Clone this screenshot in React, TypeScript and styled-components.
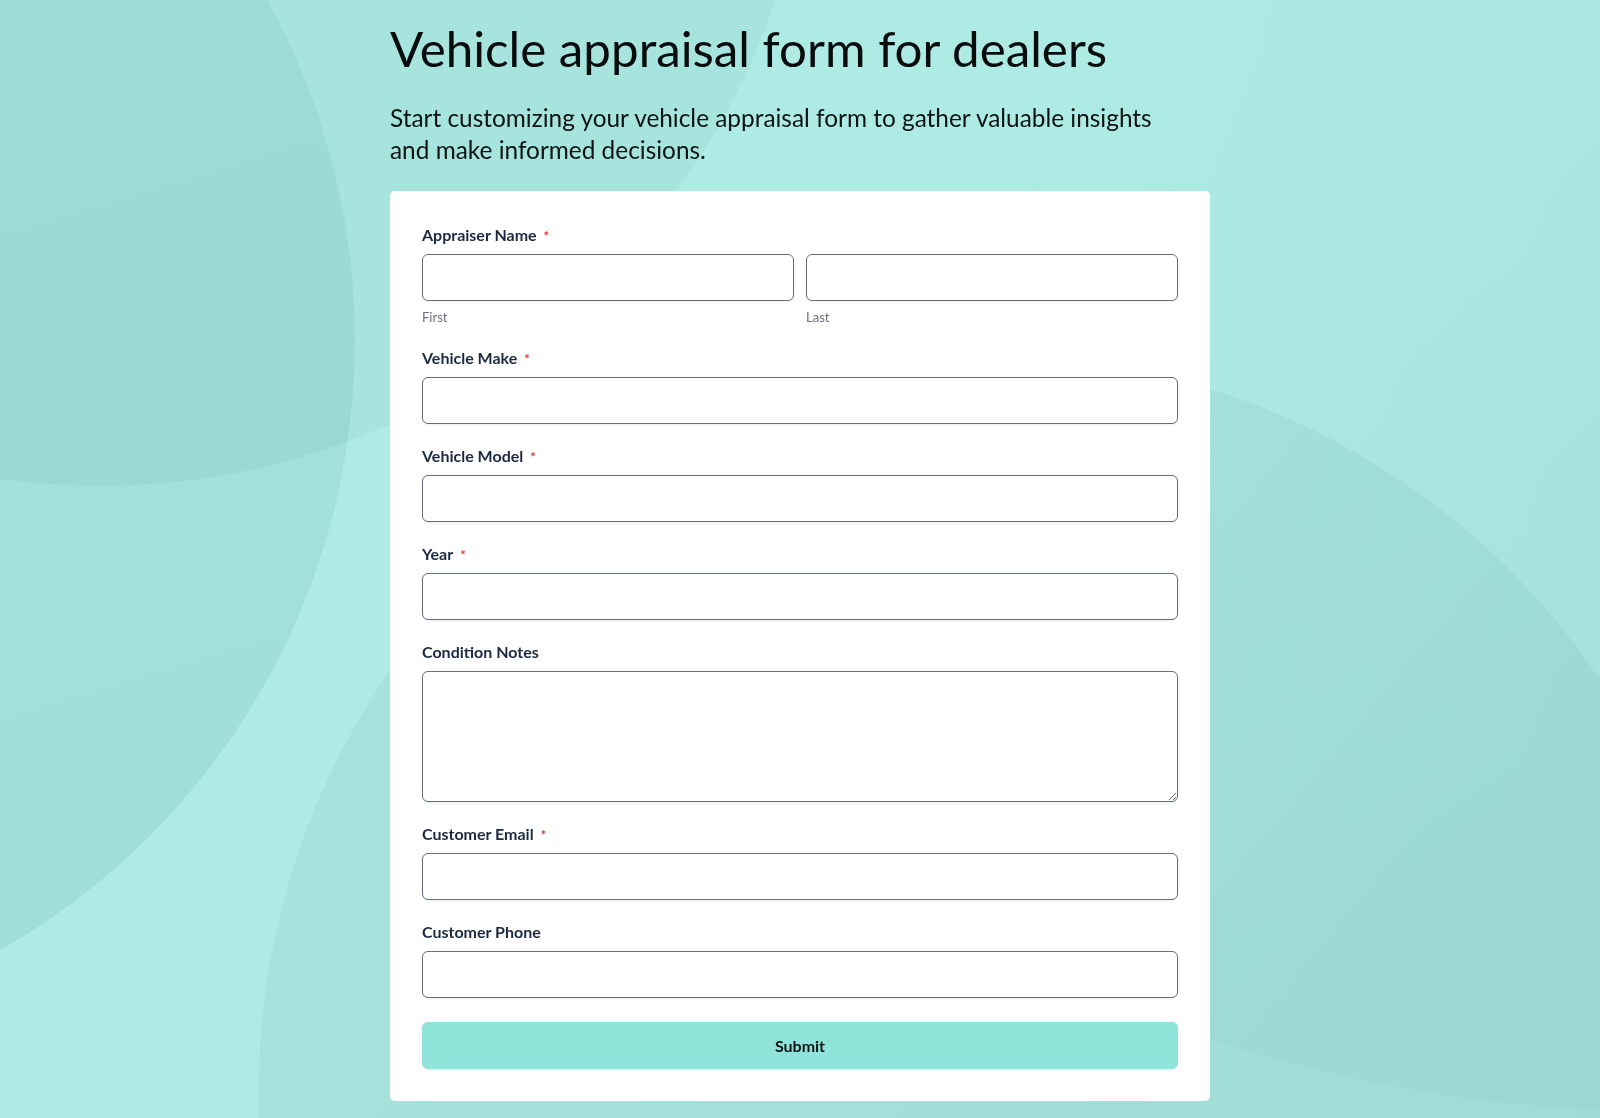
import styled, { createGlobalStyle } from "styled-components";

const GlobalStyle = createGlobalStyle`
  html, body {
    margin: 0;
    padding: 0;
    min-height: 100%;
  }
  body {
    font-family: "Lato", "Noto Sans", sans-serif;
    background: #afebe5;
  }
  * {
    box-sizing: border-box;
  }
`;

const Page = styled.div`
  position: relative;
  min-height: 100vh;
  padding: 19px 0 18px;
`;

const Backdrop = styled.svg`
  position: fixed;
  inset: 0;
  width: 100%;
  height: 100%;
  z-index: 0;
  pointer-events: none;
`;

const Column = styled.main`
  position: relative;
  z-index: 1;
  width: 820px;
  margin: 0 auto;
`;

const Title = styled.h1`
  margin: 0;
  font-size: 49.3px;
  line-height: 1.2;
  font-weight: 400;
  color: #080c0c;
`;

const Intro = styled.p`
  max-width: 790px;
  margin: 24px 0 25px;
  font-size: 24.4px;
  line-height: 32px;
  color: #0e1414;
`;

const Card = styled.form`
  background: #ffffff;
  border-radius: 5px;
  padding: 32px;
  display: flex;
  flex-direction: column;
  gap: 20px;
`;

const Field = styled.div`
  display: flex;
  flex-direction: column;
`;

const Label = styled.label`
  font-size: 16px;
  line-height: 24px;
  height: 24px;
  font-weight: 700;
  color: #1c2940;
  margin-bottom: 7px;
`;

const Required = styled.span`
  color: #d93a2b;
  font-size: 13px;
  line-height: 1;
  margin-left: 7px;
`;

const NameRow = styled.div`
  display: grid;
  grid-template-columns: 1fr 1fr;
  column-gap: 12px;
`;

const NamePart = styled.div`
  display: flex;
  flex-direction: column;
`;

const SubLabel = styled.span`
  margin-top: 7px;
  font-size: 13px;
  line-height: 18px;
  color: #6b7280;
`;

const TextInput = styled.input`
  width: 100%;
  height: 47px;
  border: 1px solid #636d80;
  border-radius: 6px;
  background: #fff;
  padding: 0 12px;
  font: inherit;
  font-size: 16px;
  box-shadow: 0 1px 3px rgba(16, 24, 40, 0.08);
  outline: none;
`;

const TextArea = styled.textarea`
  width: 100%;
  height: 131px;
  border: 1px solid #636d80;
  border-radius: 6px;
  background: #fff;
  padding: 10px 12px;
  font: inherit;
  font-size: 16px;
  box-shadow: 0 1px 3px rgba(16, 24, 40, 0.08);
  outline: none;
  resize: vertical;
  display: block;
`;

const SubmitButton = styled.button`
  margin-top: 4px;
  height: 47px;
  width: 100%;
  border: none;
  border-radius: 6px;
  background: #8fe3d8;
  color: #101418;
  font-family: "Lato", sans-serif;
  font-size: 16px;
  font-weight: 700;
  box-shadow: 0 1px 4px rgba(16, 24, 40, 0.1);
  cursor: pointer;
`;

type FieldDef = {
  id: string;
  label: string;
  required?: boolean;
  multiline?: boolean;
  type?: string;
};

const fields: FieldDef[] = [
  { id: "make", label: "Vehicle Make", required: true },
  { id: "model", label: "Vehicle Model", required: true },
  { id: "year", label: "Year", required: true },
  { id: "notes", label: "Condition Notes", multiline: true },
  { id: "email", label: "Customer Email", required: true, type: "email" },
  { id: "phone", label: "Customer Phone", type: "tel" },
];

function Shapes() {
  const shade = "rgb(40,120,110)";
  return (
    <Backdrop viewBox="0 0 1600 1118" preserveAspectRatio="none">
      <defs>
        <linearGradient id="base" x1="0" y1="0" x2="1" y2="1">
          <stop offset="0" stopColor="#afebe5" />
          <stop offset="0.5" stopColor="#afebe5" />
          <stop offset="1" stopColor="#a9e4de" />
        </linearGradient>
        <linearGradient id="rightShade" x1="0" y1="0" x2="1" y2="0.4">
          <stop offset="0" stopColor={shade} stopOpacity="0" />
          <stop offset="0.45" stopColor={shade} stopOpacity="0" />
          <stop offset="1" stopColor={shade} stopOpacity="0.09" />
        </linearGradient>
        <linearGradient id="leftShade" x1="0" y1="0" x2="0.3" y2="1">
          <stop offset="0" stopColor={shade} stopOpacity="0.03" />
          <stop offset="1" stopColor={shade} stopOpacity="0.11" />
        </linearGradient>
      </defs>
      <rect x="0" y="0" width="1600" height="1118" fill="url(#base)" />
      <circle cx="1650" cy="-289" r="1399" fill="url(#rightShade)" />
      <circle cx="992" cy="1089" r="733" fill={shade} fillOpacity="0.065" />
      <circle cx="100" cy="-226" r="712" fill={shade} fillOpacity="0.06" />
      <circle cx="-347" cy="340" r="702" fill="url(#leftShade)" />
    </Backdrop>
  );
}

export default function App() {
  return (
    <>
      <GlobalStyle />
      <Page>
        <Shapes />
        <Column>
          <Title>Vehicle appraisal form for dealers</Title>
          <Intro>
            Start customizing your vehicle appraisal form to gather valuable insights
            and make informed decisions.
          </Intro>
          <Card onSubmit={(e) => e.preventDefault()}>
            <Field>
              <Label htmlFor="first">
                Appraiser Name<Required>*</Required>
              </Label>
              <NameRow>
                <NamePart>
                  <TextInput id="first" type="text" />
                  <SubLabel>First</SubLabel>
                </NamePart>
                <NamePart>
                  <TextInput id="last" type="text" />
                  <SubLabel>Last</SubLabel>
                </NamePart>
              </NameRow>
            </Field>
            {fields.map((f) => (
              <Field key={f.id}>
                <Label htmlFor={f.id}>
                  {f.label}
                  {f.required && <Required>*</Required>}
                </Label>
                {f.multiline ? (
                  <TextArea id={f.id} />
                ) : (
                  <TextInput id={f.id} type={f.type ?? "text"} />
                )}
              </Field>
            ))}
            <SubmitButton type="submit">Submit</SubmitButton>
          </Card>
        </Column>
      </Page>
    </>
  );
}
